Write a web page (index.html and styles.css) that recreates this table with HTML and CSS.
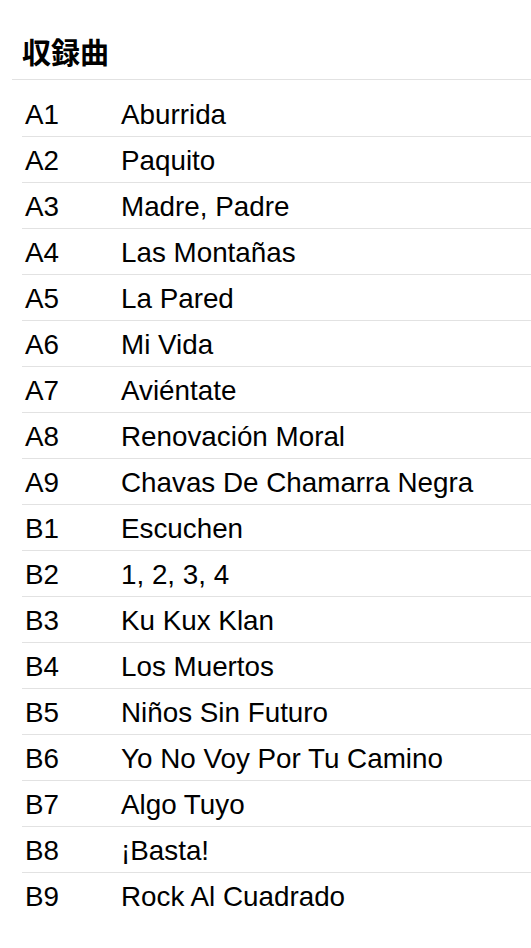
FILE: index.html
```html
<!DOCTYPE html>
<html lang="ja">
<head>
<meta charset="utf-8">
<link rel="stylesheet" href="styles.css">
</head>
<body>
<section class="tracklist">
  <h2 class="tracklist-title">収録曲</h2>
  <table class="tracks">
    <tbody>
      <tr><td class="pos">A1</td><td class="name">Aburrida</td></tr>
      <tr><td class="pos">A2</td><td class="name">Paquito</td></tr>
      <tr><td class="pos">A3</td><td class="name">Madre, Padre</td></tr>
      <tr><td class="pos">A4</td><td class="name">Las Montañas</td></tr>
      <tr><td class="pos">A5</td><td class="name">La Pared</td></tr>
      <tr><td class="pos">A6</td><td class="name">Mi Vida</td></tr>
      <tr><td class="pos">A7</td><td class="name">Aviéntate</td></tr>
      <tr><td class="pos">A8</td><td class="name">Renovación Moral</td></tr>
      <tr><td class="pos">A9</td><td class="name">Chavas De Chamarra Negra</td></tr>
      <tr><td class="pos">B1</td><td class="name">Escuchen</td></tr>
      <tr><td class="pos">B2</td><td class="name">1, 2, 3, 4</td></tr>
      <tr><td class="pos">B3</td><td class="name">Ku Kux Klan</td></tr>
      <tr><td class="pos">B4</td><td class="name">Los Muertos</td></tr>
      <tr><td class="pos">B5</td><td class="name">Niños Sin Futuro</td></tr>
      <tr><td class="pos">B6</td><td class="name">Yo No Voy Por Tu Camino</td></tr>
      <tr><td class="pos">B7</td><td class="name">Algo Tuyo</td></tr>
      <tr><td class="pos">B8</td><td class="name">¡Basta!</td></tr>
      <tr><td class="pos">B9</td><td class="name">Rock Al Cuadrado</td></tr>
    </tbody>
  </table>
</section>
</body>
</html>
```
FILE: styles.css
```css
html, body {
  margin: 0;
  padding: 0;
  background: #fff;
}
body {
  font-family: "Liberation Sans", Arial, "Noto Sans CJK JP", sans-serif;
  color: #000;
}
.tracklist {
  padding-left: 12px;
}
.tracklist-title {
  margin: 33px 0 0 0;
  padding: 0 0 9px 10px;
  font-family: "Noto Sans CJK JP", sans-serif;
  font-weight: 700;
  font-size: 29px;
  line-height: 37px;
  color: #000;
  border-bottom: 1px solid #e2e2e2;
}
.tracks {
  margin: 11px 0 0 10px;
  width: calc(100% - 10px);
  border-collapse: collapse;
}
.tracks td {
  height: 43px;
  padding: 2px 0 0 0;
  font-size: 27.8px;
  line-height: 30px;
  vertical-align: middle;
  border-bottom: 1px solid #e2e2e2;
}
.tracks tr:last-child td {
  border-bottom: none;
}
.tracks .pos {
  width: 96px;
  padding-left: 3px;
}
```
